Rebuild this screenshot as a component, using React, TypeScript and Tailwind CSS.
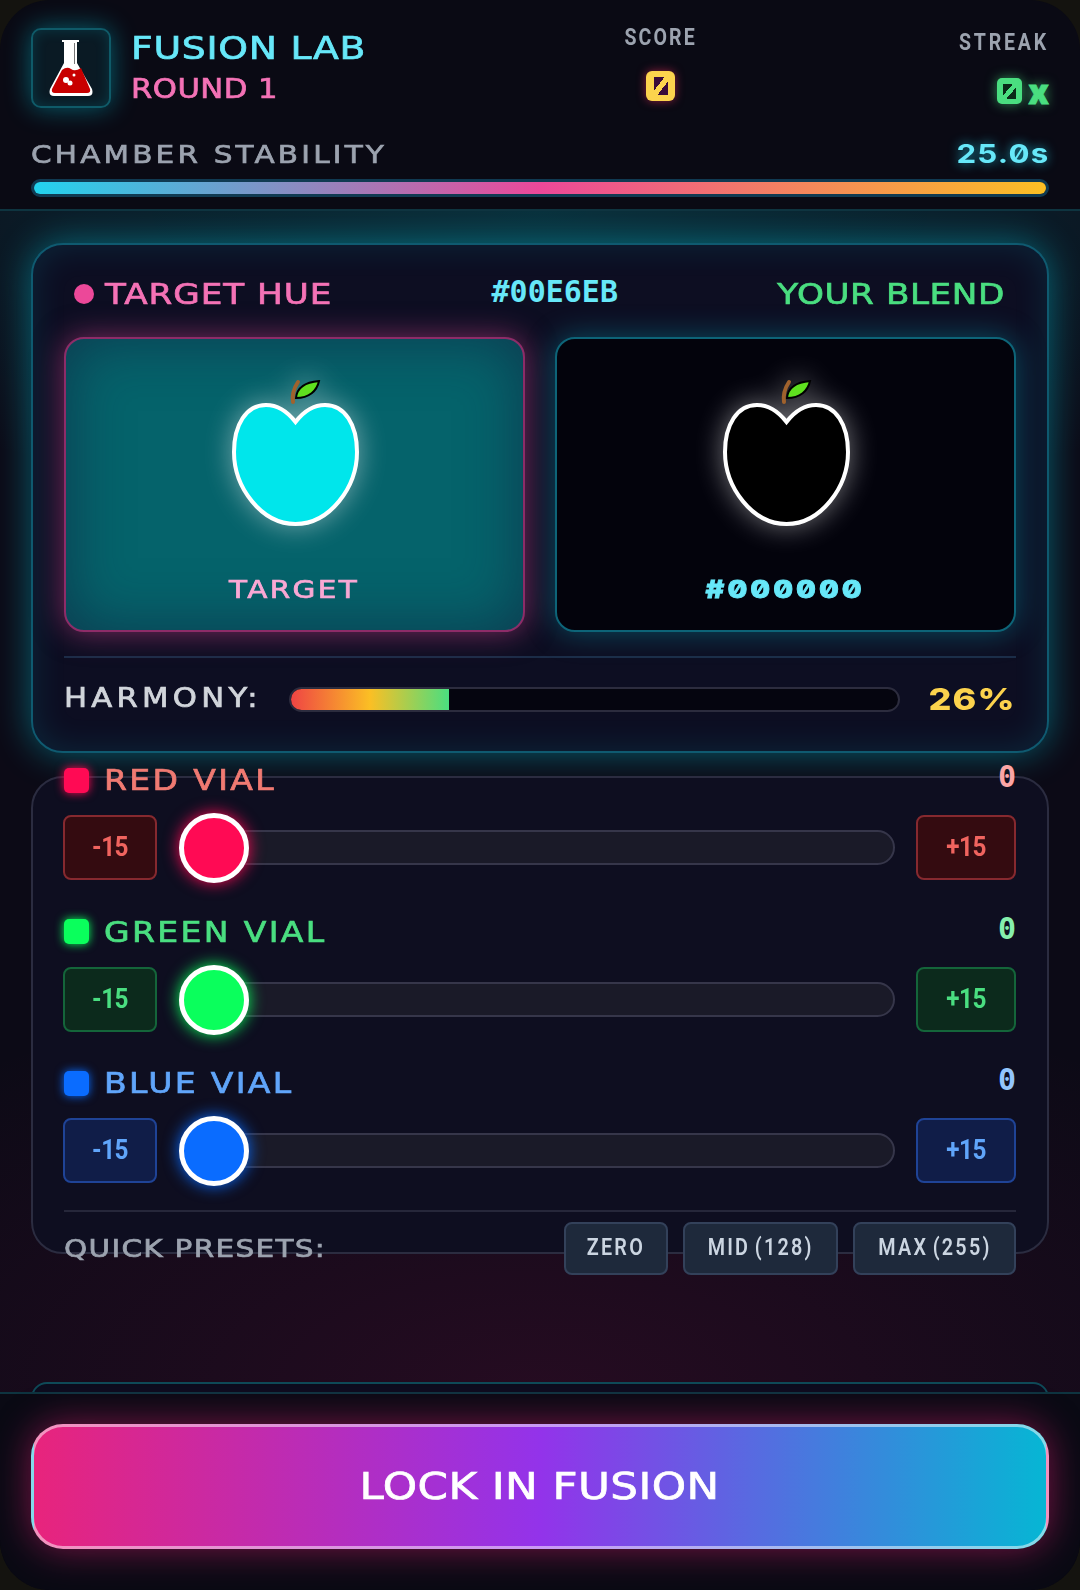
const tech = "font-['DejaVu_Sans',sans-serif] [-webkit-text-stroke:0.7px] inline-block scale-x-[1.18]"
const rounded = "font-['Roboto',sans-serif]"
const mono = "font-['DejaVu_Sans_Mono',monospace]"
const digits = "font-['Inter',sans-serif] slashed-zero"
const presetBtn = "h-[53px] rounded-[8px] border-2 border-[#33415a] bg-[#1e293b] text-[23px] font-semibold text-[#cbd5e1] font-['Roboto',sans-serif]"
const presetText = "inline-block scale-x-[0.86] tracking-[2.6px] [word-spacing:-3px] whitespace-nowrap"

const FlaskIcon = () => (
  <svg width="44" height="58" viewBox="0 0 44 58">
    <path d="M13 1H30V3H28V24L43 50Q45 57 39 57H5Q-1 57 1 50L15 24V3H13Z" fill="#fff" />
    <path d="M13 31Q18 27 22 30T32 29L41 50Q42 54 38 54H6Q2 54 3 50Z" fill="#c80000" />
    <path d="M25.5 4V25" stroke="#777" strokeWidth="1" />
    <circle cx="17" cy="41" r="3" fill="#fff" />
    <circle cx="21" cy="44" r="2.5" fill="#fff" />
    <circle cx="25" cy="36" r="1.5" fill="#fff" />
  </svg>
)

const Apple = ({ fill }: { fill: string }) => (
  <svg width="140" height="156" viewBox="0 0 140 156" className="drop-shadow-[0_0_14px_rgba(255,255,255,0.45)]">
    <path
      d="M70.5 47C62 36 52 30 41 30C21 30 9 50 9 77C9 112 36 149 70.5 149C105 149 132 112 132 77C132 50 120 30 100 30C89 30 79 36 70.5 47Z"
      fill={fill}
      stroke="#fff"
      strokeWidth="4"
    />
    <path d="M68 27C67 20 69 13 73 7" stroke="#a0622d" strokeWidth="4" fill="none" strokeLinecap="round" />
    <path d="M71 23C72 12 82 7 94 6C92 16 84 23 71 23Z" fill="#5fe01f" stroke="#000" strokeWidth="2" />
  </svg>
)

const vials = [
  {
    name: "RED VIAL",
    square: "bg-[#ff0a54] shadow-[0_0_10px_#ff0a54]",
    label: "text-[#f07a72]",
    value: "text-[#fca5a5]",
    btn: "bg-[#340b10] border-[#86292f] text-[#f0645f]",
    thumb: "bg-[#ff0a54] shadow-[0_0_16px_#ff0a54]",
  },
  {
    name: "GREEN VIAL",
    square: "bg-[#0aff5c] shadow-[0_0_10px_#0aff5c]",
    label: "text-[#4ade80]",
    value: "text-[#86efac]",
    btn: "bg-[#0c2a1c] border-[#14653a] text-[#4ade80]",
    thumb: "bg-[#0aff5c] shadow-[0_0_16px_#0aff5c]",
  },
  {
    name: "BLUE VIAL",
    square: "bg-[#0a6cff] shadow-[0_0_10px_#0a6cff]",
    label: "text-[#60a5fa]",
    value: "text-[#93c5fd]",
    btn: "bg-[#101d48] border-[#1f4396] text-[#60a5fa]",
    thumb: "bg-[#0a6cff] shadow-[0_0_16px_#0a6cff]",
  },
]

const Vial = ({ vial }: { vial: (typeof vials)[number] }) => (
  <div className="flex flex-col h-[151.5px]">
    <div className="flex items-center h-[32px]">
      <span className={`w-[25px] h-[25px] rounded-[5px] ${vial.square}`} />
      <span className={`ml-[15px] mt-[2px] text-[28px] leading-none tracking-[2px] origin-left ${tech} ${vial.label}`}>{vial.name}</span>
      <span className={`ml-auto -mt-[6px] text-[30px] font-bold leading-none ${mono} ${vial.value}`}>0</span>
    </div>
    <div className="flex items-center mt-[19px] -ml-[1px]">
      <button className={`w-[94px] h-[65px] rounded-[8px] border-2 text-[27px] font-bold ${rounded} ${vial.btn}`}>
        <span className="inline-block scale-x-[0.9] tracking-[-0.5px]">-15</span>
      </button>
      <div className="relative flex-1 ml-[23px] h-[35px] rounded-full bg-[#1a1a28] border-2 border-[#36364a]">
        <span className={`absolute -left-[3px] -top-[19px] w-[70px] h-[70px] rounded-full border-[5px] border-white ${vial.thumb}`} />
      </div>
      <button className={`w-[100px] ml-[21px] h-[65px] rounded-[8px] border-2 text-[27px] font-bold ${rounded} ${vial.btn}`}>
        <span className="inline-block scale-x-[0.9] tracking-[-0.5px]">+15</span>
      </button>
    </div>
  </div>
)

const App = () => {
  return (
    <div className="w-[1080px] h-[1590px] bg-[#14130f] overflow-hidden">
      <div className="flex flex-col w-full h-full rounded-[50px] overflow-hidden bg-[#0a0a14]">
        <header className="h-[211px] shrink-0 px-[31px] pt-[28px] border-b-2 border-[#0e3440]">
          <div className="flex h-[108px]">
            <div className="w-[80px] h-[80px] flex items-center justify-center rounded-[10px] border-2 border-[#0f5a68] bg-[#0a1a24] shadow-[0_0_26px_rgba(0,200,220,0.45),inset_0_0_14px_rgba(0,200,220,0.18)]">
              <FlaskIcon />
            </div>
            <div className="ml-[20px] w-[494px] flex flex-col items-start">
              <span className={`text-[32px] leading-none mt-[4px] tracking-[0.6px] origin-left text-[#67e8f9] ${tech}`}>FUSION LAB</span>
              <span className={`text-[26px] leading-none mt-[12px] tracking-[0.4px] origin-left text-[#f472b6] ${tech}`}>ROUND 1</span>
            </div>
            <div className="w-[71px] -mt-[2px] flex flex-col items-center">
              <span className={`inline-block scale-x-[0.85] text-[23px] leading-none font-bold tracking-[2.5px] text-[#9ca3af] ${rounded}`}>SCORE</span>
              <span className="mt-[22px] w-[29px] h-[30px] flex items-center justify-center rounded-[6px] bg-[#fcd34d] shadow-[0_0_10px_rgba(255,50,100,0.55)]">
                <span className={`w-[14px] h-[18px] text-[14px] leading-[18px] text-center text-transparent bg-[linear-gradient(to_top_left,#3a0a3a_38%,#fcd34d_38%,#fcd34d_62%,#3a0a3a_62%)] ${digits}`}>0</span>
              </span>
            </div>
            <div className="ml-auto flex flex-col items-end">
              <span className={`inline-block origin-right scale-x-[0.85] mt-[3px] text-[23px] leading-none font-bold tracking-[3.3px] text-[#9ca3af] ${rounded}`}>STREAK</span>
              <div className="mt-[19px] flex items-center gap-[6px]">
                <span className="w-[25px] h-[26px] flex items-center justify-center rounded-[5px] bg-[#4ade80] shadow-[0_0_12px_rgba(74,222,128,0.6)]">
                  <span className={`w-[13px] h-[15px] text-[12px] leading-[15px] text-center text-transparent bg-[linear-gradient(to_top_left,#0a2a18_38%,#4ade80_38%,#4ade80_62%,#0a2a18_62%)] ${digits}`}>0</span>
                </span>
                <span className="mt-[2px] text-[34px] leading-none font-black text-[#4ade80] font-['Inter',sans-serif] [-webkit-text-stroke:0.8px] [text-shadow:0_0_12px_rgba(74,222,128,0.7)]">x</span>
              </div>
            </div>
          </div>
          <div className="flex items-center justify-between mt-[2px] h-[32px]">
            <span className={`text-[25px] leading-none tracking-[2.7px] origin-left text-[#9ca3af] ${tech}`}>CHAMBER STABILITY</span>
            <span className={`inline-block origin-right scale-x-[1.2] text-[26px] leading-none font-bold tracking-[1px] text-[#67e8f9] [text-shadow:0_0_10px_rgba(34,211,238,0.7)] ${digits}`}>25.0s</span>
          </div>
          <div className="mt-[9px] h-[18px] rounded-full border-[3px] border-[#103a52] bg-[#0a0a14]">
            <div className="h-full rounded-full bg-[linear-gradient(90deg,#22d3ee,#ec4899_50%,#fbbf24)]" />
          </div>
        </header>

        <main className="flex-1 min-h-0 overflow-hidden px-[31px] pt-[32px] bg-[#0c0a16] bg-[radial-gradient(ellipse_900px_300px_at_50%_0%,rgba(0,180,190,0.22),transparent),radial-gradient(ellipse_900px_420px_at_50%_100%,rgba(190,20,100,0.14),transparent)]">
          <section className="h-[510px] rounded-[32px] border-2 border-[#0f5a70] bg-[#0d0e22] px-[31px] pt-[28px] shadow-[0_0_36px_rgba(0,200,220,0.45),inset_0_0_34px_rgba(0,200,220,0.14)]">
            <div className="flex items-center h-[36px] mt-[3px]">
              <span className="ml-[10px] w-[20px] h-[20px] rounded-full bg-[#ec4899]" />
              <span className={`ml-[11px] text-[29px] leading-none tracking-[0.8px] origin-left text-[#f472b6] ${tech}`}>TARGET HUE</span>
              <span className={`ml-[194px] -mt-[4px] text-[30px] leading-none font-bold text-[#67e8f9] ${mono}`}>#00E6EB</span>
              <span className={`ml-auto mr-[11px] text-[29px] leading-none tracking-[0.5px] origin-right text-[#4ade80] ${tech}`}>YOUR BLEND</span>
            </div>
            <div className="flex justify-between mt-[25px]">
              <div className="w-[461px] h-[295px] flex flex-col items-center rounded-[20px] border-2 border-[#8d2c68] bg-[#05636b] shadow-[0_0_30px_rgba(236,72,153,0.5),inset_0_0_60px_rgba(18,30,60,0.6)]">
                <div className="mt-[36px]"><Apple fill="#00e6eb" /></div>
                <span className={`mt-[46px] text-[25px] leading-none tracking-[2px] text-[#f9a8d4] ${tech}`}>TARGET</span>
              </div>
              <div className="w-[461px] h-[295px] flex flex-col items-center rounded-[20px] border-2 border-[#0d6478] bg-[#03030c] shadow-[0_0_30px_rgba(0,200,220,0.35)]">
                <div className="mt-[36px]"><Apple fill="#000" /></div>
                <span className={`inline-block scale-x-[1.15] mt-[46px] text-[25px] leading-none font-extrabold tracking-[2.6px] text-[#67e8f9] [-webkit-text-stroke:0.8px] ${digits}`}>#000000</span>
              </div>
            </div>
            <div className="mt-[24px] border-t-2 border-[#1c2d48] flex items-center pt-[26px]">
              <div className="w-[225px]">
                <span className={`text-[26px] leading-none tracking-[3.6px] origin-left text-[#d1d5db] ${tech}`}>HARMONY:</span>
              </div>
              <div className="w-[611px] h-[25px] rounded-full border-2 border-[#2c2c3e] bg-[#05050f] overflow-hidden">
                <div className="w-[26%] h-full bg-[linear-gradient(90deg,#ef4444,#fbbf24_50%,#4ade80)]" />
              </div>
              <span className={`ml-auto inline-block origin-right scale-x-[1.2] text-[30px] leading-none font-extrabold tracking-[1px] text-[#fcd34d] font-['Inter',sans-serif]`}>26%</span>
            </div>
          </section>

          <section className="mt-[23px] h-[478px] rounded-[32px] border-2 border-[#2b2c40] bg-[#0e0e20] px-[31px]">
            <div className="-mt-[14px]">
              {vials.map((vial) => (
                <Vial key={vial.name} vial={vial} />
              ))}
              <div className="border-t-2 border-[#26273a] -mt-[9px] flex items-center pt-[10px]">
                <span className={`text-[25px] leading-none tracking-[1.1px] origin-left text-[#9ca3af] ${tech}`}>QUICK PRESETS:</span>
                <div className="ml-auto flex gap-[15px]">
                  <button className={`w-[104px] ${presetBtn}`}><span className={presetText}>ZERO</span></button>
                  <button className={`w-[155px] ${presetBtn}`}><span className={presetText}>MID (128)</span></button>
                  <button className={`w-[163px] ${presetBtn}`}><span className={presetText}>MAX (255)</span></button>
                </div>
              </div>
            </div>
          </section>

          <section className="mt-[128px] h-[60px] rounded-t-[16px] border-2 border-[#0f4a58] bg-[#0c0c1e]" />
        </main>

        <footer className="h-[198px] shrink-0 border-t-2 border-[#0e3440] px-[31px] pt-[30px] bg-[#0a0a14]">
          <button className="w-full h-[125px] rounded-[32px] border-[3px] border-white/50 bg-[linear-gradient(90deg,#e8247c,#9333ea_50%,#06b6d4)] shadow-[0_0_36px_rgba(236,30,120,0.5)]">
            <span className={`text-[37px] text-white tracking-[0.35px] ${tech}`}>LOCK IN FUSION</span>
          </button>
        </footer>
      </div>
    </div>
  )
}

export default App
